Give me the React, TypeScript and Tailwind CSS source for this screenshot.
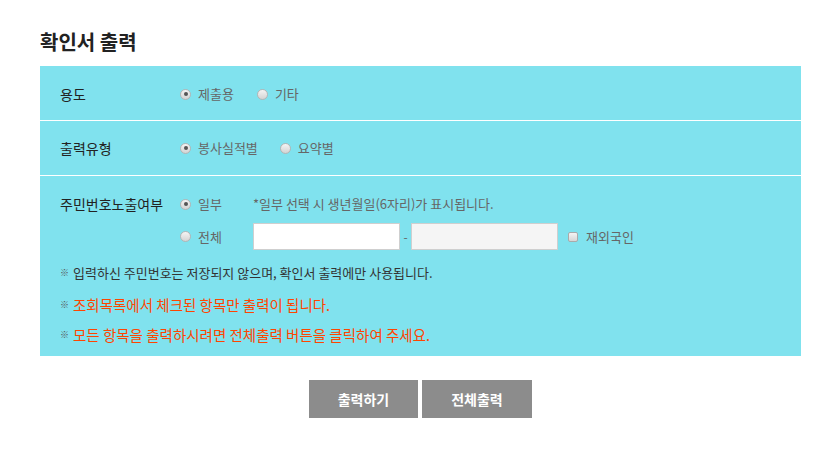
function Radio({ checked }: { checked?: boolean }) {
  return (
    <span className="relative inline-block w-[11px] h-[11px] rounded-full border border-[#b5b5b5] bg-gradient-to-b from-[#f4f4f4] to-[#d4d4d4] shrink-0">
      {checked && (
        <span className="absolute left-[2.5px] top-[2.5px] w-[4px] h-[4px] rounded-full bg-[#555]" />
      )}
    </span>
  );
}

function Option({ label, checked }: { label: string; checked?: boolean }) {
  return (
    <label className="flex items-center gap-[7px] text-[13px] text-[#666]">
      <Radio checked={checked} />
      {label}
    </label>
  );
}

export default function App() {
  return (
    <div
      className="w-[838px] h-[463px] bg-white pl-[40px] pt-[28px]"
      style={{ fontFamily: '"Noto Sans CJK KR", "Noto Sans", sans-serif' }}
    >
      <h1 className="text-[20px] font-bold text-[#222] leading-[28px] mb-[10px]">확인서 출력</h1>

      <div className="w-[761px] bg-[#80e2ee]">
        {/* 용도 */}
        <div className="flex items-center h-[55px] pt-[2px] border-b border-white">
          <div className="w-[140px] pl-[20px] text-[14px] text-[#222]">용도</div>
          <div className="flex items-center gap-[23px]">
            <Option label="제출용" checked />
            <Option label="기타" />
          </div>
        </div>

        {/* 출력유형 */}
        <div className="flex items-center h-[55px] border-b border-white">
          <div className="w-[140px] pl-[20px] text-[14px] text-[#222]">출력유형</div>
          <div className="flex items-center gap-[22px]">
            <Option label="봉사실적별" checked />
            <Option label="요약별" />
          </div>
        </div>

        {/* 주민번호노출여부 */}
        <div className="pt-[18px] pb-[11px] pl-[20px]">
          <div className="flex items-center h-[20px]">
            <div className="w-[120px] text-[14px] text-[#222]">주민번호노출여부</div>
            <div className="w-[73px]">
              <Option label="일부" checked />
            </div>
            <span className="text-[13px] text-[#666]">*일부 선택 시 생년월일(6자리)가 표시됩니다.</span>
          </div>

          <div className="flex items-center mt-[9px] h-[27px]">
            <div className="w-[120px]" />
            <div className="w-[73px]">
              <Option label="전체" />
            </div>
            <input
              type="text"
              className="w-[147px] h-[27px] bg-white border border-[#cfcfcf] outline-none"
            />
            <span className="w-[11px] text-center text-[12px] text-[#666]">-</span>
            <input
              type="text"
              className="w-[147px] h-[27px] bg-[#f5f5f5] border border-[#cfcfcf] outline-none"
            />
            <label className="flex items-center gap-[8px] ml-[10px] text-[13px] text-[#666]">
              <span className="inline-block w-[10px] h-[10px] rounded-[2px] border border-[#aaa] bg-gradient-to-b from-[#f4f4f4] to-[#d6d6d6]" />
              재외국인
            </label>
          </div>

          <div className="mt-[13px] flex flex-col">
            <p className="flex items-center h-[20px] text-[13px] text-[#333]">
              <span className="w-[13px] text-[9px] text-[#555]">※</span>
              입력하신 주민번호는 저장되지 않으며, 확인서 출력에만 사용됩니다.
            </p>
            <p className="flex items-center h-[20px] mt-[12px] text-[14.5px] text-[#ff4500]">
              <span className="w-[13px] text-[9px] text-[#555]">※</span>
              조회목록에서 체크된 항목만 출력이 됩니다.
            </p>
            <p className="flex items-center h-[20px] mt-[10px] text-[14.5px] text-[#ff4500]">
              <span className="w-[13px] text-[9px] text-[#555]">※</span>
              모든 항목을 출력하시려면 전체출력 버튼을 클릭하여 주세요.
            </p>
          </div>
        </div>
      </div>

      <div className="w-[761px] flex justify-center gap-[4px] mt-[24px]">
        <button className="w-[109px] h-[38px] bg-[#8c8c8c] text-white text-[14px] font-bold">출력하기</button>
        <button className="w-[110px] h-[38px] bg-[#8c8c8c] text-white text-[14px] font-bold">전체출력</button>
      </div>
    </div>
  );
}
